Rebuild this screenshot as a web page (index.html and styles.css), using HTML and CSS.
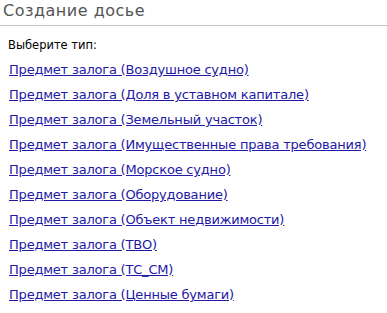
FILE: index.html
```html
<!DOCTYPE html>
<html>
<head>
    <meta charset="UTF-8">
    <title>Создание досье</title>
    <link rel="stylesheet" href="styles.css">
</head>
<body>
    <div class="header">Создание досье</div>
    <div class="content">
        <div class="label">Выберите тип:</div>
        <ul class="types">
            <li><a href="#">Предмет залога (Воздушное судно)</a></li>
            <li><a href="#">Предмет залога (Доля в уставном капитале)</a></li>
            <li><a href="#">Предмет залога (Земельный участок)</a></li>
            <li><a href="#">Предмет залога (Имущественные права требования)</a></li>
            <li><a href="#">Предмет залога (Морское судно)</a></li>
            <li><a href="#">Предмет залога (Оборудование)</a></li>
            <li><a href="#">Предмет залога (Объект недвижимости)</a></li>
            <li><a href="#">Предмет залога (ТВО)</a></li>
            <li><a href="#">Предмет залога (ТС_СМ)</a></li>
            <li><a href="#">Предмет залога (Ценные бумаги)</a></li>
        </ul>
    </div>
</body>
</html>
```

FILE: styles.css
```css
* {
    box-sizing: border-box;
}

body {
    margin: 0;
    font-family: Tahoma, "DejaVu Sans", sans-serif;
    background: #fff;
    color: #000;
}

.header {
    height: 26px;
    padding: 1px 0 0 3px;
    font-size: 16px;
    line-height: 20px;
    letter-spacing: 0.5px;
    color: #555;
    border-bottom: 1px solid #c2c2c2;
}

.content {
    padding: 12px 0 0 8px;
}

.label {
    font-size: 11.5px;
    line-height: 14px;
    margin-bottom: 10px;
}

.types {
    list-style: none;
    margin: 0;
    padding: 0 0 0 1px;
}

.types li {
    height: 25px;
    font-size: 13px;
    line-height: 15px;
    letter-spacing: -0.2px;
}

.types a {
    color: #2219a6;
}
```
